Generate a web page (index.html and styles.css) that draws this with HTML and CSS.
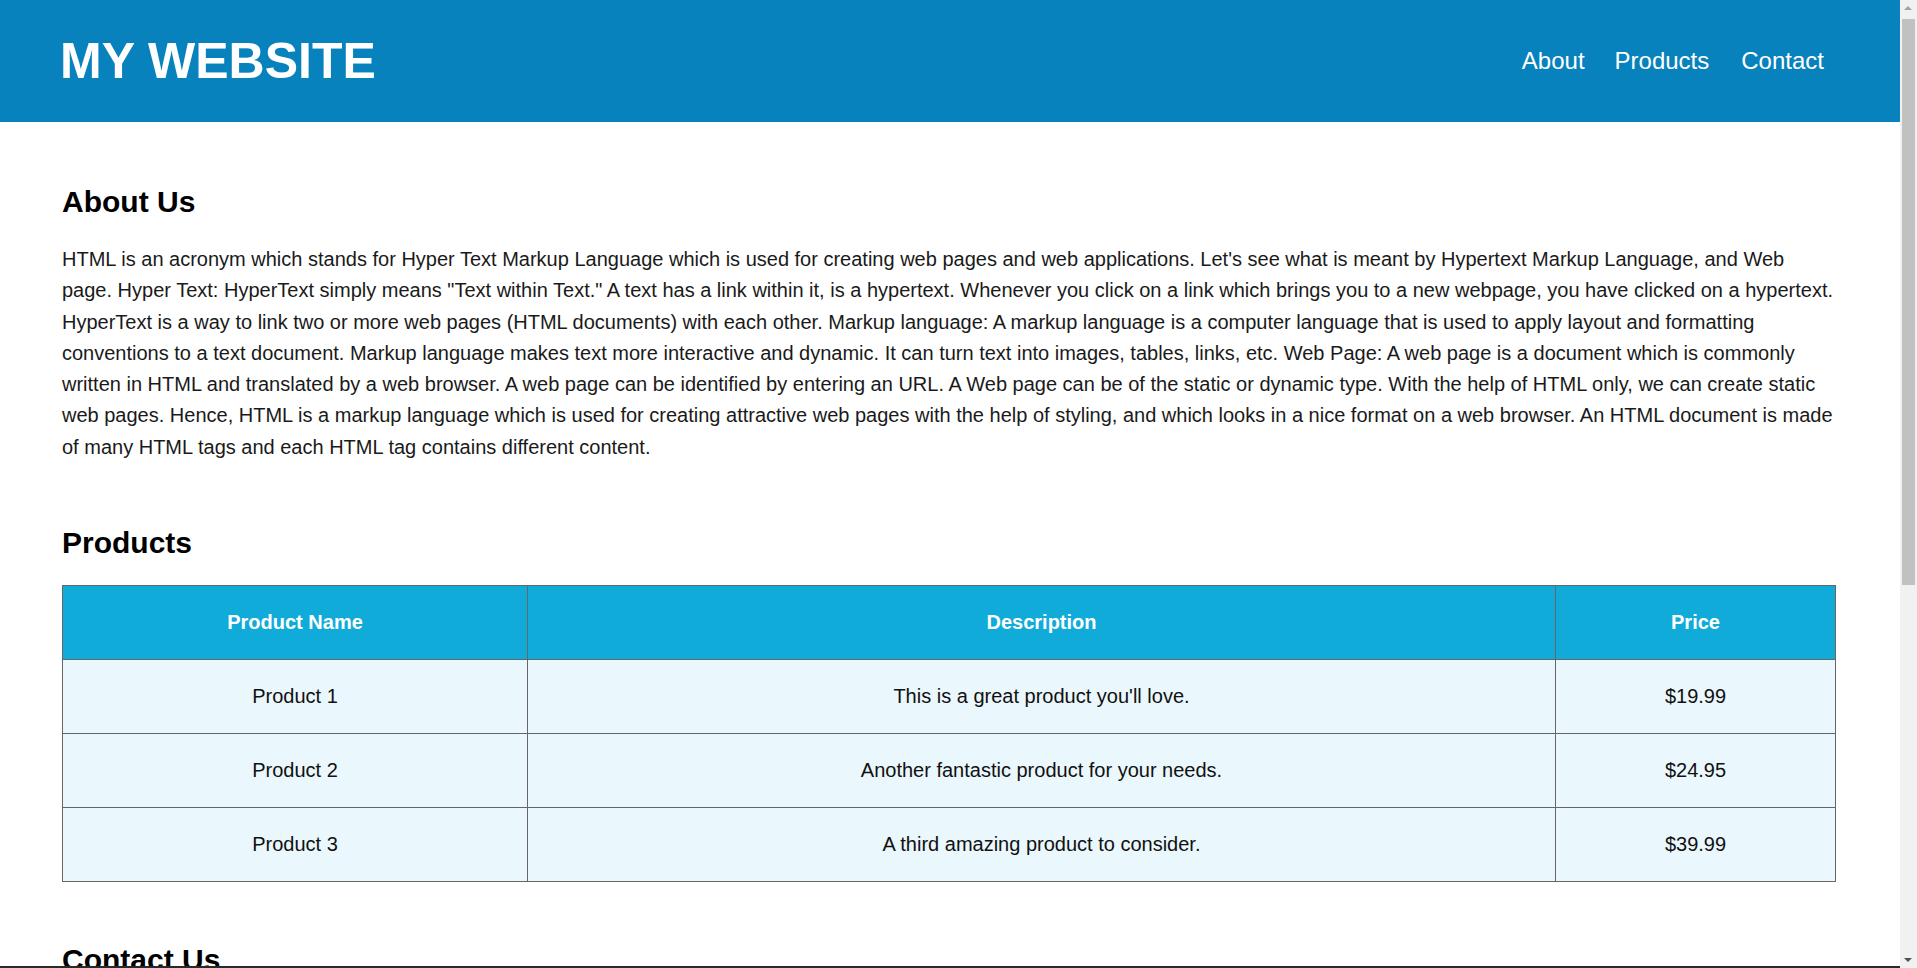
FILE: index.html
```html
<!DOCTYPE html>
<html lang="en">
<head>
<meta charset="utf-8">
<title>My Website</title>
<link rel="stylesheet" href="styles.css">
</head>
<body>
<header class="site-header">
  <div class="logo">MY WEBSITE</div>
  <nav class="nav">
    <a class="nav-link nav-first" href="#about">About</a>
    <a class="nav-link" href="#products">Products</a>
    <a class="nav-link" href="#contact">Contact</a>
  </nav>
</header>
<main class="main">
  <section class="section" id="about">
    <h2 class="section-title">About Us</h2>
    <p class="about-text">HTML is an acronym which stands for Hyper Text Markup Language which is used for creating web pages and web applications. Let's see what is meant by Hypertext Markup Language, and Web page. Hyper Text: HyperText simply means "Text within Text." A text has a link within it, is a hypertext. Whenever you click on a link which brings you to a new webpage, you have clicked on a hypertext. HyperText is a way to link two or more web pages (HTML documents) with each other. Markup language: A markup language is a computer language that is used to apply layout and formatting conventions to a text document. Markup language makes text more interactive and dynamic. It can turn text into images, tables, links, etc. Web Page: A web page is a document which is commonly written in HTML and translated by a web browser. A web page can be identified by entering an URL. A Web page can be of the static or dynamic type. With the help of HTML only, we can create static web pages. Hence, HTML is a markup language which is used for creating attractive web pages with the help of styling, and which looks in a nice format on a web browser. An HTML document is made of many HTML tags and each HTML tag contains different content.</p>
  </section>
  <section class="section section-products" id="products">
    <h2 class="section-title">Products</h2>
    <table class="product-table">
      <colgroup>
        <col class="col-name">
        <col class="col-desc">
        <col class="col-price">
      </colgroup>
      <thead>
        <tr><th>Product Name</th><th>Description</th><th>Price</th></tr>
      </thead>
      <tbody>
        <tr><td>Product 1</td><td>This is a great product you'll love.</td><td>$19.99</td></tr>
        <tr><td>Product 2</td><td>Another fantastic product for your needs.</td><td>$24.95</td></tr>
        <tr><td>Product 3</td><td>A third amazing product to consider.</td><td>$39.99</td></tr>
      </tbody>
    </table>
  </section>
  <section class="section" id="contact">
    <h2 class="section-title">Contact Us</h2>
    <form class="contact-form">
      <label class="field-label" for="name">Name:</label>
      <input class="field" type="text" id="name">
      <label class="field-label" for="email">Email:</label>
      <input class="field" type="email" id="email">
      <label class="field-label" for="message">Message:</label>
      <textarea class="field field-area" id="message"></textarea>
      <button class="submit" type="button">Submit</button>
    </form>
  </section>
</main>
<footer class="site-footer">&copy; 2024 My Website. All rights reserved.</footer>
<div class="scrollbar" aria-hidden="true">
  <div class="scroll-arrow scroll-up"></div>
  <div class="scroll-track"><div class="scroll-thumb"></div></div>
  <div class="scroll-arrow scroll-down"></div>
</div>
<div class="bottom-edge" aria-hidden="true"></div>
</body>
</html>
```
FILE: styles.css
```css
html, body {
  margin: 0;
  padding: 0;
}
body {
  font-family: "Liberation Sans", Arial, Helvetica, sans-serif;
  color: #1a1a1a;
  background: #ffffff;
  margin-right: 17px;
}
.site-header {
  height: 122px;
  box-sizing: border-box;
  padding: 0 60px;
  background: #0782bd;
  display: flex;
  align-items: center;
  justify-content: space-between;
}
.logo {
  color: #ffffff;
  font-weight: bold;
  font-size: 50px;
  line-height: 56px;
}
.nav {
  display: flex;
}
.nav-link {
  color: #ffffff;
  text-decoration: none;
  font-size: 24px;
  line-height: 28px;
  margin: 0 16px;
}
.nav-first {
  margin-right: 14px;
}
.main {
  padding: 63px 64px 0 62px;
}
.section {
  margin-bottom: 63px;
}
.section-products {
  margin-bottom: 61px;
}
.section-title {
  margin: 0 0 25px 0;
  font-size: 30px;
  line-height: 34px;
  font-weight: bold;
  color: #000000;
}
.about-text {
  margin: 0;
  font-size: 20px;
  line-height: 31.25px;
}
.product-table {
  width: 100%;
  margin-top: 2px;
  border-collapse: collapse;
  table-layout: fixed;
  border: 1px solid #666666;
  font-size: 20px;
  line-height: 23px;
}
.col-name { width: 465px; }
.col-price { width: 280px; }
.product-table th,
.product-table td {
  border: 1px solid #666666;
  padding: 25px 10px;
  text-align: center;
}
.product-table th {
  background: #11abd9;
  color: #ffffff;
  font-weight: bold;
}
.product-table td {
  background: #eaf7fc;
  color: #111111;
}
.contact-form {
  display: flex;
  flex-direction: column;
  gap: 10px;
  max-width: 700px;
}
.field-label {
  font-size: 20px;
}
.field {
  font-family: inherit;
  font-size: 18px;
  padding: 10px;
  border: 1px solid #999999;
  border-radius: 4px;
}
.field-area {
  height: 120px;
  resize: vertical;
}
.submit {
  align-self: flex-start;
  margin-top: 10px;
  font-family: inherit;
  font-size: 20px;
  padding: 12px 28px;
  color: #ffffff;
  background: #0782bd;
  border: none;
  border-radius: 4px;
}
.site-footer {
  background: #0782bd;
  color: #ffffff;
  text-align: center;
  font-size: 18px;
  padding: 30px 0;
}
/* simulated classic scrollbar overlay */
.scrollbar {
  position: fixed;
  top: 0;
  right: 0;
  bottom: 0;
  width: 17px;
  background: #f1f1f1;
  display: flex;
  flex-direction: column;
}
.scroll-arrow {
  height: 17px;
  flex: 0 0 17px;
  position: relative;
}
.scroll-up::after,
.scroll-down::after {
  content: "";
  position: absolute;
  left: 4px;
  border-left: 4px solid transparent;
  border-right: 4px solid transparent;
}
.scroll-up::after {
  top: 6px;
  border-bottom: 4px solid #a3a3a3;
}
.scroll-down::after {
  bottom: 6px;
  border-top: 4px solid #505050;
}
.scroll-track {
  flex: 1;
  padding: 2px 2px 0 2px;
}
.scroll-thumb {
  height: 566px;
  background: #c1c1c1;
}
.bottom-edge {
  position: fixed;
  left: 0;
  right: 17px;
  bottom: 0;
  height: 2px;
  background: #2a2a2a;
}
```
